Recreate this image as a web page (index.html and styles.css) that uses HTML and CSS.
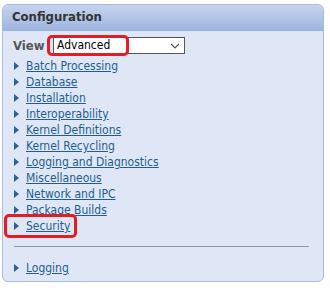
FILE: index.html
```html
<!DOCTYPE html>
<html lang="en">
<head>
  <meta charset="UTF-8" />
  <title>Configuration</title>
  <link rel="stylesheet" href="styles.css">
</head>
<body>
  <div class="panel">
    <div class="panel-head">Configuration</div>
    <div class="panel-body">
      <div class="view-row">
        <span class="view-label">View</span>
        <span class="select-wrap">
          <select class="view-select">
            <option>Advanced</option>
            <option>Basic</option>
          </select>
          <svg class="chevron" width="10" height="6" viewBox="0 0 10 6"><path d="M1 1 L5 5 L9 1" fill="none" stroke="#555" stroke-width="1.2"/></svg>
          <span class="mark mark-view"></span>
        </span>
      </div>
      <ul class="links">
        <li><a href="#">Batch Processing</a></li>
        <li><a href="#">Database</a></li>
        <li><a href="#">Installation</a></li>
        <li><a href="#">Interoperability</a></li>
        <li><a href="#">Kernel Definitions</a></li>
        <li><a href="#">Kernel Recycling</a></li>
        <li><a href="#">Logging and Diagnostics</a></li>
        <li><a href="#">Miscellaneous</a></li>
        <li><a href="#">Network and IPC</a></li>
        <li><a href="#">Package Builds</a></li>
        <li class="marked"><a href="#">Security</a><span class="mark mark-sec"></span></li>
      </ul>
      <hr class="sep">
      <ul class="links">
        <li><a href="#">Logging</a></li>
      </ul>
    </div>
  </div>
</body>
</html>
```

FILE: styles.css
```css
body {
  margin: 0;
  padding: 4px 4px 0 2px;
  background: #fff;
  font-family: "DejaVu Sans Condensed", "DejaVu Sans", sans-serif;
}
.panel {
  width: 322px;
  height: 278px;
  border: 1px solid #a9bcdc;
  border-radius: 6px;
  background: #dfe7f6;
  box-sizing: border-box;
  overflow: hidden;
}
.panel-head {
  height: 26px;
  box-sizing: border-box;
  padding: 4px 9px 0;
  background: linear-gradient(#c6d4ee, #9fb6e0);
  border-bottom: 1px solid #8fb6e6;
  font-size: 13px;
  font-weight: bold;
  color: #333;
}
.panel-body {
  padding: 4px 10px 0;
}
.view-row {
  display: flex;
  align-items: center;
  height: 18px;
  margin-top: 1px;
}
.view-label {
  font-size: 13px;
  font-weight: bold;
  color: #555;
  width: 40px;
}
.select-wrap {
  position: relative;
  display: flex;
}
.view-select {
  appearance: none;
  width: 132px;
  height: 17px;
  font-family: "DejaVu Sans Condensed", "DejaVu Sans", sans-serif;
  font-size: 12px;
  padding: 0 3px;
  border: 1px solid #555;
  border-radius: 0;
  background: #fff;
  color: #000;
}
.chevron {
  position: absolute;
  right: 5px;
  top: 6px;
  pointer-events: none;
}
.mark {
  position: absolute;
  border: 3px solid #e41c23;
  border-radius: 5px;
}
.mark-view {
  left: -6px;
  top: -2px;
  width: 76px;
  height: 15px;
}
.links {
  list-style: none;
  margin: 4px 0 0;
  padding: 0;
}
.links li {
  position: relative;
  height: 16px;
  padding-left: 13px;
  font-size: 12px;
  line-height: 16px;
}
.links li::before {
  content: "";
  position: absolute;
  left: 1px;
  top: 4px;
  border-left: 5px solid #2f5f96;
  border-top: 4px solid transparent;
  border-bottom: 4px solid transparent;
}
.links a {
  color: #1f5e8a;
}
.mark-sec {
  left: -9px;
  top: -4px;
  width: 67px;
  height: 18px;
}
.sep {
  margin: 12px 4px 13px 1px;
  border: 0;
  border-top: 1px solid #8d949e;
}
```
